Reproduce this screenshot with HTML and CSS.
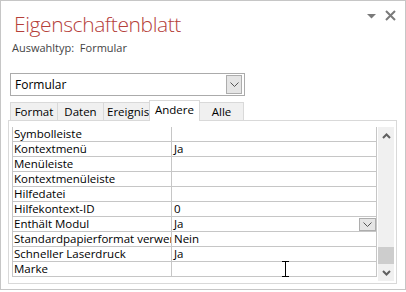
FILE: index.html
```html
<!DOCTYPE html>
<html lang="de">
<head>
<meta charset="utf-8">
<link rel="stylesheet" href="styles.css">
</head>
<body>
<div class="sheet">
  <div class="head">
    <div class="title">Eigenschaftenblatt</div>
    <div class="controls">
      <svg class="tri" width="9" height="5" viewBox="0 0 9 5"><path d="M0 0H9L4.5 4.5Z" fill="#7a7a7a"/></svg>
      <svg class="close" width="11" height="11" viewBox="0 0 11 11"><path d="M1 1L10 10M10 1L1 10" stroke="#7a7a7a" stroke-width="2"/></svg>
    </div>
  </div>
  <div class="subtitle">Auswahltyp:&nbsp; Formular</div>
  <div class="combo">
    <span class="combo-text">Formular</span>
    <span class="combo-btn"><svg width="9" height="5" viewBox="0 0 9 5"><path d="M0.5 0.5L4.5 4.5L8.5 0.5" fill="none" stroke="#555" stroke-width="1"/></svg></span>
  </div>
  <div class="tabs">
    <div class="tab">Format</div>
    <div class="tab">Daten</div>
    <div class="tab t3">Ereignis</div>
    <div class="tab active">Andere</div>
    <div class="tab">Alle</div>
  </div>
  <div class="panel">
    <div class="grid">
      <div class="row"><span class="lbl">Symbolleiste</span><span class="val"></span></div>
      <div class="row"><span class="lbl">Kontextmenü</span><span class="val">Ja</span></div>
      <div class="row"><span class="lbl">Menüleiste</span><span class="val"></span></div>
      <div class="row"><span class="lbl">Kontextmenüleiste</span><span class="val"></span></div>
      <div class="row"><span class="lbl">Hilfedatei</span><span class="val"></span></div>
      <div class="row"><span class="lbl">Hilfekontext-ID</span><span class="val">0</span></div>
      <div class="row"><span class="lbl">Enthält Modul</span><span class="val">Ja<span class="cell-btn"><svg width="9" height="5" viewBox="0 0 9 5"><path d="M0.5 0.5L4.5 4.5L8.5 0.5" fill="none" stroke="#555" stroke-width="1"/></svg></span></span></div>
      <div class="row"><span class="lbl">Standardpapierformat verwenden</span><span class="val">Nein</span></div>
      <div class="row"><span class="lbl">Schneller Laserdruck</span><span class="val">Ja</span></div>
      <div class="row"><span class="lbl">Marke</span><span class="val"><svg class="ibeam" width="7" height="16" viewBox="0 0 7 16"><path d="M0 0.5H7M0 15.5H7M3.5 0.5V15.5" stroke="#000" stroke-width="1"/></svg></span></div>
    </div>
    <div class="scroll">
      <svg class="arr" width="9" height="6" viewBox="0 0 9 6"><path d="M1 5L4.5 1.5L8 5" fill="none" stroke="#606060" stroke-width="2"/></svg>
      <div class="track"><div class="thumb"></div></div>
      <svg class="arr" width="9" height="6" viewBox="0 0 9 6"><path d="M1 1L4.5 4.5L8 1" fill="none" stroke="#606060" stroke-width="2"/></svg>
    </div>
  </div>
</div>
</body>
</html>
```
FILE: styles.css
```css
* { box-sizing: border-box; }
body {
  margin: 0;
  background: #fff;
  font-family: "Open Sans", "Noto Sans", sans-serif;
  color: #000;
}
.sheet {
  width: 406px;
  height: 290px;
  border: 1px solid #c6c6c6;
  display: flex;
  flex-direction: column;
}
.head {
  display: flex;
  justify-content: space-between;
  align-items: flex-start;
  padding: 10px 9px 0 13px;
}
.title {
  font-size: 21px;
  font-weight: 300;
  line-height: 26px;
  letter-spacing: -0.4px;
  color: #b5403a;
}
.controls {
  display: flex;
  align-items: center;
  gap: 9px;
  margin-top: -1px;
}
.tri { display: block; margin-top: 1px; }
.close { display: block; }
.subtitle {
  font-size: 11px;
  line-height: 14px;
  color: #444;
  margin: 4px 0 0 11px;
}
.combo {
  margin: 18px 0 0 9px;
  width: 235px;
  height: 23px;
  border: 1px solid #ababab;
  display: flex;
  align-items: center;
  justify-content: space-between;
  padding: 0 2px 0 4px;
}
.combo-text { font-size: 12px; }
.combo-btn {
  width: 16px;
  height: 19px;
  border: 1px solid #adadad;
  background: #e5e5e5;
  display: flex;
  align-items: center;
  justify-content: center;
}
.tabs {
  display: flex;
  align-items: flex-end;
  margin: 4px 0 0 9px;
  height: 20px;
  position: relative;
  z-index: 1;
}
.tab {
  flex: none;
  height: 18px;
  border: 1px solid #d9d9d9;
  border-bottom: none;
  border-left: none;
  background: #f0f0f0;
  font-size: 11.5px;
  line-height: 17px;
  padding: 0;
  text-align: center;
  white-space: nowrap;
  overflow: hidden;
}
.tab:first-child { border-left: 1px solid #d9d9d9; width: 48px; }
.tab:nth-child(2) { width: 46px; }
.tab.t3 { width: 46px; text-align: left; padding-left: 3px; }
.tab.active {
  width: 51px;
  height: 21px;
  margin-bottom: -1px;
  margin-left: -1px;
  background: #fff;
  border-left: 1px solid #d9d9d9;
  line-height: 18px;
  padding-bottom: 3px;
}
.tab:nth-child(5) { width: 44px; }
.panel {
  margin: 0 0 0 7px;
  width: 389px;
  height: 164px;
  border: 1px solid #d9d9d9;
  display: flex;
  align-items: flex-start;
  padding: 6px 2px 0 3px;
}
.grid {
  width: 365px;
  border-left: 1px solid #c6c6c6;
  border-right: 1px solid #c6c6c6;
}
.row {
  display: flex;
  height: 15px;
  border-bottom: 1px solid #c6c6c6;
  font-size: 11.5px;
  line-height: 14px;
}
.lbl {
  width: 159px;
  padding-left: 1px;
  white-space: nowrap;
  overflow: hidden;
  border-right: 1px solid #c6c6c6;
}
.val {
  flex: 1;
  padding-left: 2px;
  position: relative;
}
.cell-btn {
  position: absolute;
  right: 0;
  top: 1px;
  width: 17px;
  height: 13px;
  border: 1px solid #adadad;
  background: #e5e5e5;
  display: flex;
  align-items: center;
  justify-content: center;
}
.ibeam {
  position: absolute;
  left: 110px;
  top: -1px;
}
.scroll {
  width: 16px;
  height: 154px;
  margin-left: 1px;
  background: #f0f0f0;
  display: flex;
  flex-direction: column;
  align-items: center;
  padding: 6px 0 5px;
}
.arr { display: block; flex: none; }
.track {
  flex: 1;
  width: 100%;
  display: flex;
  flex-direction: column;
  justify-content: flex-end;
  padding-bottom: 6px;
}
.thumb {
  height: 17px;
  background: #cdcdcd;
}
```
